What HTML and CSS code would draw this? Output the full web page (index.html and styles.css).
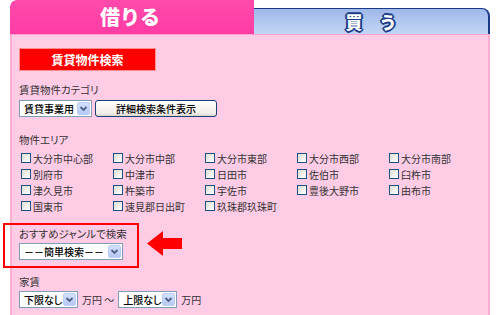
FILE: index.html
```html
<!DOCTYPE html>
<html lang="ja">
<head>
<meta charset="utf-8">
<link rel="stylesheet" href="styles.css">
</head>
<body>
<div class="wrap">
  <div class="tabs">
    <div class="tab tab-rent">借りる</div>
    <div class="tab tab-buy">買　う</div>
  </div>
  <div class="panel">
    <div class="title-btn">賃貸物件検索</div>

    <div class="label">賃貸物件カテゴリ</div>
    <div class="row">
      <span class="sel sel-cat"><span class="sel-text">賃貸事業用</span><span class="sel-btn"><svg viewBox="0 0 11 11" width="11" height="11"><path d="M2.5 4 L5.5 7 L8.5 4" fill="none" stroke="#4d6185" stroke-width="1.8"/></svg></span></span>
      <span class="btn">詳細検索条件表示</span>
    </div>

    <div class="label label-area">物件エリア</div>
    <div class="grid">
      <label class="cb"><span class="box"></span>大分市中心部</label>
      <label class="cb"><span class="box"></span>大分市中部</label>
      <label class="cb"><span class="box"></span>大分市東部</label>
      <label class="cb"><span class="box"></span>大分市西部</label>
      <label class="cb"><span class="box"></span>大分市南部</label>
      <label class="cb"><span class="box"></span>別府市</label>
      <label class="cb"><span class="box"></span>中津市</label>
      <label class="cb"><span class="box"></span>日田市</label>
      <label class="cb"><span class="box"></span>佐伯市</label>
      <label class="cb"><span class="box"></span>臼杵市</label>
      <label class="cb"><span class="box"></span>津久見市</label>
      <label class="cb"><span class="box"></span>杵築市</label>
      <label class="cb"><span class="box"></span>宇佐市</label>
      <label class="cb"><span class="box"></span>豊後大野市</label>
      <label class="cb"><span class="box"></span>由布市</label>
      <label class="cb"><span class="box"></span>国東市</label>
      <label class="cb"><span class="box"></span>速見郡日出町</label>
      <label class="cb"><span class="box"></span>玖珠郡玖珠町</label>
    </div>

    <div class="rec-row">
      <div class="rec-box">
        <div class="label">おすすめジャンルで検索</div>
        <span class="sel sel-rec"><span class="sel-text">－－簡単検索－－</span><span class="sel-btn"><svg viewBox="0 0 11 11" width="11" height="11"><path d="M2.5 4 L5.5 7 L8.5 4" fill="none" stroke="#4d6185" stroke-width="1.8"/></svg></span></span>
      </div>
      <svg class="arrow" viewBox="0 0 35 25" width="35" height="25"><polygon points="0,12.5 16,0 16,7 35,7 35,18 16,18 16,25" fill="#ff0000"/></svg>
    </div>

    <div class="label label-rent">家賃</div>
    <div class="row">
      <span class="sel sel-price"><span class="sel-text">下限なし</span><span class="sel-btn"><svg viewBox="0 0 11 11" width="11" height="11"><path d="M2.5 4 L5.5 7 L8.5 4" fill="none" stroke="#4d6185" stroke-width="1.8"/></svg></span></span>
      <span class="unit">万円 ～</span>
      <span class="sel sel-price"><span class="sel-text">上限なし</span><span class="sel-btn"><svg viewBox="0 0 11 11" width="11" height="11"><path d="M2.5 4 L5.5 7 L8.5 4" fill="none" stroke="#4d6185" stroke-width="1.8"/></svg></span></span>
      <span class="unit">万円</span>
    </div>
  </div>
</div>
</body>
</html>
```

FILE: styles.css
```css
html, body {
  margin: 0;
  padding: 0;
  background: #ffffff;
}
body {
  font-family: "Noto Sans CJK JP", "Noto Sans", sans-serif;
  color: #333333;
  font-size: 10px;
  overflow: hidden;
  height: 315px;
}
.wrap {
  margin-left: 10px;
  width: 480px;
  height: 315px;
  display: flex;
  flex-direction: column;
}
.tabs {
  display: flex;
  align-items: flex-end;
  height: 34px;
}
.tab {
  display: flex;
  align-items: center;
  justify-content: center;
  box-sizing: border-box;
  font-weight: bold;
}
.tab-rent {
  width: 244px;
  height: 34px;
  background: linear-gradient(#ff4aab, #ff3ca4);
  border-top-left-radius: 7px;
  color: #ffffff;
  font-size: 20px;
  font-weight: 900;
  padding-bottom: 2px;
  padding-right: 4px;
}
.tab-buy {
  flex: 1;
  height: 26px;
  background: linear-gradient(#9fb8ea, #c3d6f6);
  border-top: 1px solid #1a3c86;
  border-right: 2px solid #1a3c86;
  border-top-right-radius: 8px;
  color: #ffffff;
  font-size: 17px;
  font-weight: 900;
  text-shadow:
    1px 0 0 #1a3c86, -1px 0 0 #1a3c86, 0 1px 0 #1a3c86, 0 -1px 0 #1a3c86,
    1px 1px 0 #1a3c86, -1px -1px 0 #1a3c86, 1px -1px 0 #1a3c86, -1px 1px 0 #1a3c86,
    2px 0 0 #1a3c86, -2px 0 0 #1a3c86, 0 2px 0 #1a3c86, 0 -2px 0 #1a3c86;
}
.panel {
  flex: 1;
  background: #ffcce6;
  border-top: 1px solid #ff9fcd;
  border-left: 2px solid #ffadd0;
  border-right: 2px solid #ffadd0;
  padding-left: 7px;
  display: flex;
  flex-direction: column;
  align-items: flex-start;
}
.title-btn {
  margin-top: 13px;
  width: 137px;
  height: 23px;
  box-sizing: border-box;
  background: #ff0000;
  border: 1px solid #ff8c8c;
  color: #ffffff;
  font-weight: bold;
  font-size: 12px;
  display: flex;
  align-items: center;
  justify-content: center;
}
.label {
  font-size: 10.5px;
  line-height: 14px;
  height: 14px;
  color: #333333;
  font-feature-settings: "palt";
  margin-top: 12px;
  margin-bottom: 3px;
}
.label-area {
  margin-top: 16px;
}
.label-rent {
  margin-top: 7px;
  margin-bottom: 2px;
}
.row {
  display: flex;
  align-items: center;
  gap: 3px;
  height: 17px;
}
.sel {
  display: inline-flex;
  align-items: center;
  box-sizing: border-box;
  height: 17px;
  background: #ffffff;
  border: 1px solid #7f9db9;
  color: #000000;
}
.sel-cat { width: 73px; }
.sel-rec { width: 104px; }
.sel-price { width: 59px; }
.sel-text {
  flex: 1;
  padding-left: 4px;
  font-size: 10px;
  line-height: 15px;
  white-space: nowrap;
  overflow: hidden;
  font-feature-settings: "palt";
}
.sel-text, .btn { font-weight: 500; }
.sel-btn {
  width: 13px;
  height: 13px;
  margin-right: 1px;
  box-sizing: border-box;
  border: 1px solid #bccdf0;
  border-radius: 2px;
  background: linear-gradient(#d4e1fd, #b6c9f5);
  display: flex;
  align-items: center;
  justify-content: center;
}
.btn {
  width: 122px;
  height: 17px;
  box-sizing: border-box;
  border: 1px solid #1c3f75;
  border-radius: 3px;
  background: linear-gradient(#ffffff, #f0efea 80%, #d8d6cc);
  color: #000000;
  font-size: 10px;
  display: flex;
  align-items: center;
  justify-content: center;
}
.unit {
  font-size: 10px;
  color: #333333;
  margin: 0 1px;
}
.grid {
  display: grid;
  grid-template-columns: repeat(5, 92px);
  grid-auto-rows: 16px;
  padding-left: 2px;
}
.cb {
  display: flex;
  align-items: center;
  gap: 2px;
  font-size: 10px;
  color: #333333;
  white-space: nowrap;
}
.box {
  width: 10px;
  height: 10px;
  box-sizing: border-box;
  border: 1px solid #1c5180;
  background: linear-gradient(135deg, #dcdcd7, #ffffff);
}
.rec-row {
  display: flex;
  align-items: flex-start;
  margin-top: 9px;
  margin-left: -16px;
}
.rec-box {
  width: 136px;
  height: 45px;
  box-sizing: border-box;
  border: 2px solid #ff0000;
  padding-left: 14px;
  display: flex;
  flex-direction: column;
  align-items: flex-start;
}
.rec-box .label {
  margin-top: 2px;
  margin-bottom: 2px;
}
.arrow {
  margin-left: 8px;
  margin-top: 8px;
}
```
